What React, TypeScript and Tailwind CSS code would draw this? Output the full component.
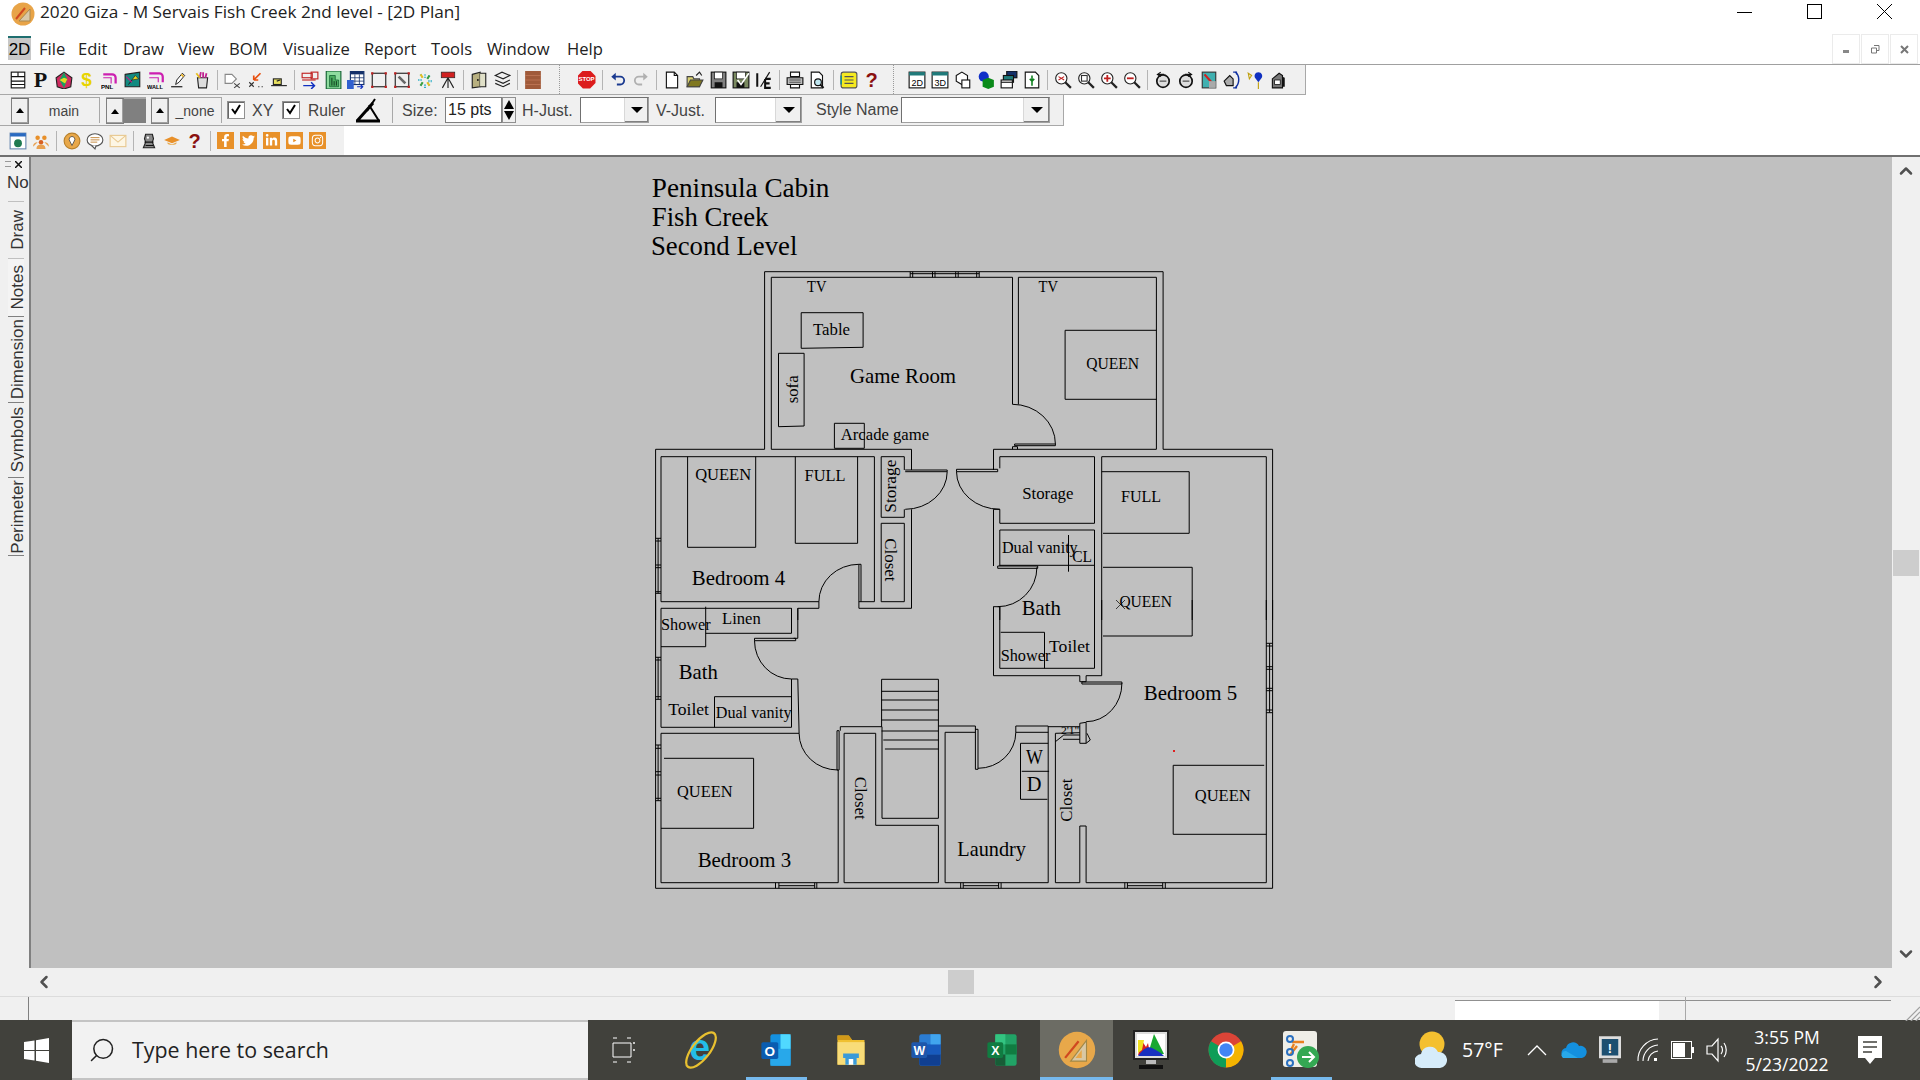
import type { ReactNode } from "react"
import { ChevronDown, ChevronLeft, ChevronRight, ChevronUp, Search } from "lucide-react"
import { FaFacebookF, FaInstagram, FaLinkedinIn, FaTwitter, FaYoutube } from "react-icons/fa"

const UI = "font-['Open_Sans',sans-serif]"
const ARIAL = "font-['Liberation_Sans',Arial,sans-serif]"

/* ---------- floor plan ---------- */

// plan points were read off two crops of the drawing, upper and lower half
const A = (x: number, y: number): [number, number] => [640 + x / 2.376, 160 + y / 3]
const B = (x: number, y: number): [number, number] => [640 + x / 2.376, 600 + y / 3]

const upperLines: number[][] = [
  [37, 868, 296, 868, 296, 335, 1243, 335, 1243, 868, 1503, 868, 1503, 1380],
  [37, 868, 37, 1380],
  [312, 868, 312, 352, 885, 352, 885, 733],
  [899, 733, 899, 352, 1227, 352, 1227, 868],
  [312, 868, 645, 868, 645, 930],
  [840, 930, 840, 868, 1227, 868],
  [50, 1325, 50, 890, 557, 890, 557, 1325, 520, 1325],
  [113, 890, 113, 1162, 275, 1162, 275, 890],
  [369, 890, 369, 1150, 517, 1150, 517, 890],
  [573, 1072, 573, 890, 628, 890, 628, 930],
  [630, 930, 730, 930, 730, 935, 630, 935],
  [628, 1048, 628, 1072, 573, 1072],
  [645, 1048, 645, 1345, 520, 1345, 520, 1213, 525, 1213, 525, 1325],
  [573, 1090, 628, 1090, 628, 1325, 573, 1325, 573, 1090],
  [425, 1325, 50, 1325],
  [50, 1345, 360, 1345, 360, 1380],
  [425, 1325, 425, 1345],
  [375, 1380, 375, 1345, 425, 1345],
  [752, 935, 850, 935, 850, 928, 752, 928, 752, 935],
  [855, 925, 855, 890, 1080, 890, 1080, 1090, 855, 1090, 855, 1048, 840, 1048, 840, 1218],
  [855, 1218, 855, 1110, 1080, 1110, 1080, 1380],
  [855, 1216, 1080, 1216],
  [1018, 1125, 1018, 1235],
  [850, 1218, 945, 1218, 945, 1225, 850, 1225, 850, 1218],
  [840, 1340, 855, 1340, 855, 1380],
  [840, 1340, 840, 1380],
  [1488, 1380, 1488, 890, 1097, 890, 1097, 1380],
  [1097, 935, 1305, 935, 1305, 1120, 1100, 1120],
  [1100, 1222, 1312, 1222, 1312, 1380],
  [383, 458, 530, 458, 530, 562, 383, 565, 383, 458],
  [329, 580, 390, 580, 390, 798, 329, 800, 329, 580],
  [462, 790, 533, 790, 533, 865, 462, 865, 462, 790],
  [1010, 511, 1227, 511],
  [1010, 511, 1010, 718, 1227, 718],
  [890, 852, 987, 852, 987, 857, 890, 857, 890, 852],
  [885, 868, 885, 860, 897, 860, 897, 868],
  [642, 335, 642, 352], [648, 335, 648, 352], [695, 335, 695, 352], [701, 335, 701, 352],
  [750, 335, 750, 352], [756, 335, 756, 352], [800, 335, 800, 352], [806, 335, 806, 352],
  [642, 341, 806, 341],
  [37, 1135, 50, 1135], [37, 1143, 50, 1143], [37, 1215, 50, 1215], [37, 1223, 50, 1223],
  [37, 1295, 50, 1295], [37, 1300, 50, 1300], [43, 1135, 43, 1300],
]

const lowerLines: number[][] = [
  [37, 0, 37, 865, 1503, 865, 1503, 0],
  [50, 25, 50, 382, 360, 382, 360, 237, 375, 237, 378, 400, 50, 400, 50, 848, 471, 848, 471, 510],
  [360, 25, 360, 100, 156, 100],
  [156, 20, 156, 140, 50, 140],
  [375, 25, 375, 115, 365, 115],
  [272, 115, 370, 115, 370, 122, 272, 122, 272, 115],
  [177, 290, 360, 290],
  [177, 290, 177, 382],
  [468, 392, 468, 510, 473, 510, 473, 392, 468, 392],
  [57, 475, 270, 475, 270, 685, 50, 685],
  [476, 392, 476, 380, 575, 380],
  [485, 848, 485, 400, 560, 400, 560, 676, 709, 676, 709, 848, 485, 848],
  [575, 380, 575, 655, 709, 655, 709, 238, 574, 238, 574, 380],
  [574, 274, 709, 274], [574, 300, 709, 300], [574, 330, 709, 330], [574, 360, 709, 360],
  [574, 393, 709, 393], [578, 420, 709, 420], [582, 447, 709, 447],
  [709, 378, 797, 378, 797, 508, 803, 508, 803, 388, 797, 388],
  [725, 397, 797, 397],
  [725, 397, 725, 848, 970, 848, 970, 378, 893, 378, 893, 397, 970, 397],
  [904, 430, 970, 430],
  [904, 430, 904, 598, 968, 598],
  [907, 514, 972, 514],
  [987, 400, 987, 848, 1045, 848, 1045, 678, 1060, 678, 1060, 848, 1488, 848, 1488, 0],
  [987, 400, 1045, 398],
  [970, 380, 1045, 380],
  [1045, 370, 1060, 367, 1060, 430, 1045, 430, 1045, 370],
  [987, 425, 1007, 405, 1045, 405],
  [1045, 418, 1005, 418],
  [1050, 246, 1145, 246, 1145, 252, 1050, 252, 1050, 246],
  [840, 20, 840, 227, 1045, 227, 1045, 245, 1060, 245, 1060, 227, 1097, 227, 1097, 0],
  [855, 20, 855, 205, 1080, 205, 1080, 0],
  [857, 97, 961, 97, 961, 205],
  [1100, 108, 1312, 108, 1312, 0],
  [1267, 496, 1483, 496],
  [1267, 496, 1267, 703, 1488, 703],
  [1062, 400, 1070, 420, 1060, 430],
  [37, 172, 50, 172], [37, 180, 50, 180], [37, 290, 50, 290], [37, 298, 50, 298], [43, 172, 43, 298],
  [37, 435, 50, 435], [37, 445, 50, 445], [37, 515, 50, 515], [37, 525, 50, 525], [37, 595, 50, 595], [37, 602, 50, 602], [43, 435, 43, 602],
  [1488, 130, 1503, 130], [1488, 138, 1503, 138], [1488, 200, 1503, 200], [1488, 208, 1503, 208],
  [1488, 265, 1503, 265], [1488, 272, 1503, 272], [1488, 330, 1503, 330], [1488, 338, 1503, 338], [1496, 130, 1496, 338],
  [322, 848, 322, 865], [330, 848, 330, 865], [415, 848, 415, 865], [420, 848, 420, 865], [330, 857, 415, 857],
  [762, 848, 762, 865], [768, 848, 768, 865], [852, 848, 852, 865], [858, 848, 858, 865], [768, 857, 852, 857],
  [1152, 848, 1152, 865], [1158, 848, 1158, 865], [1242, 848, 1242, 865], [1248, 848, 1248, 865], [1158, 857, 1242, 857],
]

type Arc = [number, number, number, number, 0 | 1]
const upperDoors: Arc[] = [
  [730, 935, 630, 1048, 1],
  [752, 935, 855, 1048, 0],
  [885, 733, 987, 852, 1],
  [520, 1213, 425, 1325, 0],
  [943, 1222, 850, 1340, 1],
]
const lowerDoors: Arc[] = [
  [272, 122, 360, 237, 0],
  [378, 400, 470, 510, 0],
  [803, 505, 893, 397, 0],
  [1060, 365, 1145, 250, 0],
]

type Label = [string, number, number, number, number]
// text, x, baseline, width, size
const upperLabels: Label[] = [
  ["Peninsula Cabin", 28, 110, 422, 27],
  ["Fish Creek", 28, 198, 277, 27],
  ["Second Level", 26, 284, 348, 27],
  ["TV", 397, 397, 46, 17],
  ["TV", 947, 397, 46, 17],
  ["Table", 411, 526, 88, 17],
  ["Game Room", 499, 668, 252, 22],
  ["Arcade game", 477, 840, 210, 17],
  ["QUEEN", 1060, 626, 126, 17],
  ["QUEEN", 131, 960, 133, 17],
  ["FULL", 391, 964, 97, 17],
  ["Storage", 908, 1017, 122, 17],
  ["FULL", 1143, 1027, 95, 17],
  ["Dual vanity", 860, 1180, 180, 17],
  ["CL", 1027, 1206, 47, 17],
  ["Bedroom 4", 123, 1275, 222, 22],
  ["QUEEN", 1139, 1340, 125, 17],
  ["Bath", 907, 1365, 93, 22],
]
const lowerLabels: Label[] = [
  ["Shower", 50, 90, 118, 17],
  ["Linen", 195, 72, 92, 17],
  ["Bath", 92, 236, 93, 22],
  ["Toilet", 67, 345, 97, 17],
  ["Dual vanity", 180, 354, 180, 17],
  ["Shower", 857, 183, 118, 17],
  ["Toilet", 972, 156, 97, 17],
  ["Bedroom 5", 1197, 299, 222, 22],
  ["QUEEN", 88, 592, 132, 17],
  ["Bedroom 3", 137, 800, 222, 22],
  ["Laundry", 754, 768, 163, 22],
  ["W", 917, 492, 40, 21],
  ["D", 919, 574, 35, 21],
  ["QUEEN", 1318, 603, 133, 17],
  ['2\'1"', 1000, 402, 44, 11],
]

const linePath = (pts: number[], map: typeof A) => {
  let d = ""
  for (let i = 0; i < pts.length; i += 2) {
    const [x, y] = map(pts[i], pts[i + 1])
    d += `${i ? "L" : "M"}${x.toFixed(1)} ${y.toFixed(1)}`
  }
  return d
}

const arcPath = (a: Arc, map: typeof A) => {
  const [x1, y1] = map(a[0], a[1])
  const [x2, y2] = map(a[2], a[3])
  return `M${x1.toFixed(1)} ${y1.toFixed(1)}A${Math.abs(x2 - x1).toFixed(1)} ${Math.abs(y2 - y1).toFixed(1)} 0 0 ${a[4]} ${x2.toFixed(1)} ${y2.toFixed(1)}`
}

function PlanLabels({ items, map }: { items: Label[]; map: typeof A }) {
  return (
    <>
      {items.map(([t, x, y, w, s], i) => {
        const [px, py] = map(x, y)
        return (
          <text key={i} x={px} y={py} fontSize={s} textLength={w / 2.376} lengthAdjust="spacingAndGlyphs">
            {t}
          </text>
        )
      })}
    </>
  )
}

function SideLabel({ t, x, y, len, deg }: { t: string; x: number; y: number; len: number; deg: number }) {
  return (
    <text transform={`translate(${x} ${y}) rotate(${deg})`} fontSize={17} textLength={len} lengthAdjust="spacingAndGlyphs">
      {t}
    </text>
  )
}

function FloorPlan() {
  const side = [
    { t: "sofa", p: A(375, 730), len: 28, deg: -90 },
    { t: "Storage", p: A(608, 1058), len: 53, deg: -90 },
    { t: "Closet", p: A(583, 1135), len: 43, deg: 90 },
    { t: "Closet", p: B(512, 530), len: 43, deg: 90 },
    { t: "Closet", p: B(1026, 665), len: 43, deg: -90 },
  ]
  return (
    <svg width={1861} height={811} viewBox="31 157 1861 811" className="block">
      <g fill="none" stroke="#000" strokeWidth={1}>
        {upperLines.map((l, i) => <path key={i} d={linePath(l, A)} />)}
        {lowerLines.map((l, i) => <path key={i} d={linePath(l, B)} />)}
        {upperDoors.map((a, i) => <path key={i} d={arcPath(a, A)} />)}
        {lowerDoors.map((a, i) => <path key={i} d={arcPath(a, B)} />)}
        <path d="M1116 600l9 9m0-9l-9 9" strokeWidth={0.7} />
      </g>
      <rect x={1173} y={750} width={2} height={2} fill="#e02020" />
      <g fontFamily="'Liberation Serif','Times New Roman',serif" fill="#000">
        <PlanLabels items={upperLabels} map={A} />
        <PlanLabels items={lowerLabels} map={B} />
        {side.map((s, i) => (
          <SideLabel key={i} t={s.t} x={s.p[0]} y={s.p[1]} len={s.len} deg={s.deg} />
        ))}
      </g>
    </svg>
  )
}

/* ---------- toolbar bits ---------- */

function Ico({ children }: { children: ReactNode }) {
  return <svg width={18} height={18} viewBox="0 0 16 16" className="block">{children}</svg>
}

function Btn({ children }: { children: ReactNode }) {
  return <div className="flex h-full w-[23px] shrink-0 items-center justify-center">{children}</div>
}

function Sep() {
  return (
    <div className="flex h-full w-[8px] shrink-0 items-center justify-center">
      <div className="h-[20px] w-px bg-[#b4b4b4]" />
    </div>
  )
}

function Grip({ w }: { w: string }) {
  return <div className={`h-full shrink-0 ${w} flex items-center justify-center`}><div className="h-full w-[2px] border-l border-dotted border-[#9a9a9a]" /></div>
}

function Letter({ c, color, cls }: { c: string; color: string; cls: string }) {
  return <span className={`leading-none ${cls}`} style={{ color }}>{c}</span>
}

function Mag({ mark }: { mark: ReactNode }) {
  return (
    <Ico>
      <circle cx={6.5} cy={6.5} r={5} fill="#fff" stroke="#222" strokeWidth={1} />
      <path d="M10 10l5 5" stroke="#222" strokeWidth={2} />
      {mark}
    </Ico>
  )
}

const row1: ReactNode[] = [
  <Ico><rect x={2} y={1} width={12} height={14} fill="#fff" stroke="#111" /><path d="M2 5h12M2 9h12M2 12h12M8 1v4" stroke="#111" /></Ico>,
  <Letter c="P" color="#111" cls="font-['Liberation_Serif',serif] text-[22px] font-bold" />,
  <Ico><path d="M8 1l7 5-1 8-6 2-6-2-1-8z" fill="#d02a60" stroke="#222" /><path d="M8 1l3 6-3 8-4-7z" fill="#18a060" /><path d="M4 8l4-2 3 1-2 4z" fill="#e8d820" /></Ico>,
  <Letter c="$" color="#e8d400" cls={`${ARIAL} text-[19px] font-bold`} />,
  <Ico><path d="M2 3h8a3 3 0 0 1 3 3v5" fill="none" stroke="#cc1fb0" strokeWidth={2} /><path d="M2 6h7v5" fill="none" stroke="#cc1fb0" /><text x={0} y={16} fontSize={5.5} fontFamily="'Liberation Sans'" fontWeight="bold">PNL</text></Ico>,
  <Ico><path d="M1 3l13-2v13H1z" fill="#118a80" stroke="#222" /><path d="M4 12l6-8 3 3-6 1z" fill="#e8d820" stroke="#222" strokeWidth={0.6} /><path d="M2 5l5 5" stroke="#c02080" /></Ico>,
  <Ico><path d="M2 2h9a3 3 0 0 1 3 3v5" fill="none" stroke="#cc1fb0" strokeWidth={2} /><path d="M2 6h8v4" fill="none" stroke="#cc1fb0" /><text x={0} y={16} fontSize={5} fontFamily="'Liberation Sans'" fontWeight="bold">WALL</text></Ico>,
  <Ico><path d="M1 14h10" stroke="#111" /><path d="M5 12l1-4 5-6 2 2-5 6z" fill="#fff" stroke="#111" strokeWidth={0.8} /><path d="M10 3l2 2" stroke="#e8b020" strokeWidth={1.4} /></Ico>,
  <Ico><path d="M4 6h9l-1 9H5z" fill="#ddd" stroke="#222" /><path d="M6 6l1-5M9 6V1M11 6l1-4" stroke="#c02090" strokeWidth={1.6} /><path d="M3 2l3 4" stroke="#e8c020" strokeWidth={1.6} /></Ico>,
  <Ico><path d="M1 3h6l4 4-4 4H1z" fill="#fff" stroke="#888" /><path d="M9 11l5 4m0-4l-5 4" stroke="#444" /></Ico>,
  <Ico><path d="M12 2L6 8M6 8V4M6 8h4" stroke="#e85010" strokeWidth={1.5} fill="none" /><path d="M2 10l4 4m0-4l-4 4" stroke="#333" /><path d="M10 14h1m2 0h1" stroke="#222" /></Ico>,
  <Ico><rect x={3} y={7} width={7} height={5} fill="#e8e060" stroke="#222" /><path d="M1 13h14" stroke="#222" /><path d="M6 9l3-1" stroke="#222" /></Ico>,
  <Ico><rect x={1} y={2} width={9} height={4} fill="none" stroke="#c02020" /><rect x={9} y={1} width={6} height={6} fill="none" stroke="#c02020" /><path d="M1 8h12" stroke="#c02020" /><path d="M2 13h10m-3-3l3 3-3 3" stroke="#1030c0" strokeWidth={1.3} fill="none" /></Ico>,
  <Ico><rect x={2} y={0} width={13} height={16} fill="#8fdc9f" stroke="#126030" /><path d="M5 4h5v4h3v6H5z" fill="#4cae60" stroke="#126030" strokeWidth={0.7} /><path d="M7 6v7M9 9v4M11 9v4" stroke="#0a3018" strokeWidth={0.8} /></Ico>,
  <Ico><rect x={3} y={0} width={12} height={12} fill="#fff" stroke="#14306a" /><path d="M3 0h12v3H3z" fill="#14306a" /><path d="M7 3v9M11 3v9M3 6h12M3 9h12" stroke="#14306a" strokeWidth={0.7} /><rect x={0} y={8} width={6} height={8} fill="#3060d0" /><path d="M9 14h5m-2-2l2 2-2 2" stroke="#1030c0" fill="none" /></Ico>,
  <Ico><rect x={2} y={2} width={12} height={12} fill="none" stroke="#222" /><path d="M1 1h2v2H1zM13 1h2v2h-2zM1 13h2v2H1zM13 13h2v2h-2z" fill="#c02020" /></Ico>,
  <Ico><rect x={2} y={2} width={12} height={12} fill="#eee" stroke="#222" /><path d="M1 1h2v2H1zM13 1h2v2h-2zM1 13h2v2H1zM13 13h2v2h-2z" fill="#c02020" /><path d="M5 5l6 6" stroke="#666" strokeWidth={2.4} /></Ico>,
  <Ico><path d="M8 3v3M4 3l2 3M12 4l-2 3M2 8h3M11 9h3M4 13l2-3M8 15v-4M12 13l-2-3" strokeWidth={1.8} stroke="#30b0c8" strokeDasharray="1 1" /><path d="M4 3l2 3M12 13l-2-3" stroke="#e8c020" strokeWidth={1.8} /><path d="M12 4l-2 3M4 13l2-3" stroke="#40a040" strokeWidth={1.8} /></Ico>,
  <Ico><rect x={2} y={1} width={12} height={5} fill="#d02020" stroke="#222" strokeWidth={0.6} /><path d="M8 6L3 15M8 6v9M8 6l5 9" stroke="#222" fill="none" /></Ico>,
  <Ico><path d="M2 3l7-2v13l-7 1z" fill="#b8b080" stroke="#222" /><path d="M9 2h5v12H9" fill="#e0e0c8" stroke="#222" /><circle cx={7} cy={8} r={0.8} fill="#111" /></Ico>,
  <Ico><path d="M2 4l6-3 7 3-6 3zM2 8l7 3 6-3M2 11l7 3 6-3" fill="none" stroke="#222" /></Ico>,
]

const row1b: ReactNode[] = [
  <Ico><rect x={1} y={0} width={14} height={16} fill="#a05a3a" /><path d="M1 4h14M1 8h14M1 12h14" stroke="#c07858" strokeWidth={0.7} /></Ico>,
]

const row1c: ReactNode[] = [
  <div className="relative flex h-[18px] w-[18px] items-center justify-center bg-[#dc1c1c] [clip-path:polygon(30%_0,70%_0,100%_30%,100%_70%,70%_100%,30%_100%,0_70%,0_30%)]">
    <span className={`${ARIAL} text-[6px] font-bold text-white`}>STOP</span>
  </div>,
]

const row1d: ReactNode[] = [
  <Ico><path d="M5 5h5a3.5 3.5 0 0 1 0 7H7" fill="none" stroke="#1a3a90" strokeWidth={1.6} /><path d="M6 1.5L2 5l4 3.5z" fill="#1a3a90" /></Ico>,
  <Ico><path d="M11 5H6a3.5 3.5 0 0 0 0 7h3" fill="none" stroke="#b0b0b0" strokeWidth={1.6} /><path d="M10 1.5L14 5l-4 3.5z" fill="#b0b0b0" /></Ico>,
]

const row1e: ReactNode[] = [
  <Ico><path d="M3 1h7l3 3v11H3z" fill="#fff" stroke="#111" /><path d="M10 1v3h3" fill="none" stroke="#111" /></Ico>,
  <Ico><path d="M1 14V5h5l1 2h5v7z" fill="#d8d070" stroke="#444" /><path d="M1 14l3-6h11l-3 6z" fill="#807820" stroke="#444" /><path d="M9 4l3-3 2 3" fill="none" stroke="#222" /></Ico>,
  <Ico><rect x={2} y={1} width={13} height={14} fill="#808080" stroke="#111" /><rect x={5} y={1} width={7} height={6} fill="#fff" stroke="#111" strokeWidth={0.6} /><rect x={5} y={10} width={7} height={5} fill="#111" /></Ico>,
  <Ico><rect x={1} y={1} width={14} height={14} fill="#7a8a60" stroke="#111" /><rect x={4} y={1} width={8} height={6} fill="#fff" stroke="#111" strokeWidth={0.6} /><rect x={4} y={10} width={7} height={5} fill="#111" /><path d="M5 8l3 4 7-10" stroke="#fff" strokeWidth={1.4} fill="none" /></Ico>,
  <Ico><path d="M2 2v12" stroke="#111" strokeWidth={1.8} /><path d="M5 14L13 1" stroke="#111" strokeWidth={1} /><path d="M9 7h5M9 7v8h5M9 11h4" stroke="#111" strokeWidth={1.8} fill="none" /></Ico>,
]

const row1f: ReactNode[] = [
  <Ico><path d="M4 1h8v4H4z" fill="#fff" stroke="#111" /><path d="M1 6h14v6H1z" fill="#bbb" stroke="#111" /><path d="M3 8h10M3 10h10" stroke="#333" strokeWidth={0.7} /><path d="M4 12h8v3H4z" fill="#fff" stroke="#111" /></Ico>,
  <Ico><path d="M2 1h7l3 3v11H2z" fill="#fff" stroke="#111" /><circle cx={8} cy={10} r={3} fill="#bfe6f0" stroke="#111" /><path d="M10 12l3 3" stroke="#111" strokeWidth={1.6} /></Ico>,
]

const row1g: ReactNode[] = [
  <Ico><rect x={1} y={1} width={14} height={14} rx={2} fill="#f5ea20" stroke="#555" /><path d="M4 5h8M4 8h8M4 11h8" stroke="#555" /><path d="M1 4v8" stroke="#1f8a8a" strokeWidth={1.5} /></Ico>,
  <Letter c="?" color="#8a1010" cls={`${ARIAL} text-[20px] font-bold`} />,
]

const panel = (label: string) => (
  <Ico>
    <rect x={1} y={1} width={14} height={14} fill="#fff" stroke="#111" />
    <rect x={1} y={1} width={14} height={3} fill="#1f7a7a" />
    <text x={3} y={13} fontSize={8} fontFamily="'Liberation Sans'" stroke="none">{label}</text>
  </Ico>
)

const row1h: ReactNode[] = [
  panel("2D"),
  panel("3D"),
  <Ico><path d="M2 4l5-3 5 3v5l-5 3-5-3z" fill="#fff" stroke="#111" /><rect x={7} y={8} width={7} height={7} fill="#fff" stroke="#111" /></Ico>,
  <Ico><circle cx={6} cy={5} r={4.5} fill="#1030c8" /><path d="M5 8l5-2 5 2v6l-5 2-5-2z" fill="#0a8a1a" /></Ico>,
  <Ico><rect x={6} y={0} width={9} height={6} fill="#14306a" stroke="#111" /><rect x={3} y={4} width={9} height={6} fill="#1f7a7a" stroke="#111" /><rect x={1} y={8} width={10} height={7} fill="#fff" stroke="#111" /><path d="M1 10h10" stroke="#111" /></Ico>,
  <Ico><path d="M2 1h9l3 3v11H2z" fill="#fff" stroke="#111" /><path d="M8 4v4m-2-1l2 2 2-2M8 13V9" stroke="#108020" strokeWidth={1.4} fill="none" /></Ico>,
]

const row1i: ReactNode[] = [
  <Mag mark={<path d="M4 5l5 3m0-3L4 8" stroke="#c02020" />} />,
  <Mag mark={<rect x={4} y={4} width={5} height={5} fill="none" stroke="#333" />} />,
  <Mag mark={<path d="M6.5 3.5v6M3.5 6.5h6" stroke="#c02020" strokeWidth={1.6} />} />,
  <Mag mark={<path d="M3.5 6.5h6" stroke="#c02020" strokeWidth={1.6} />} />,
]

const row1j: ReactNode[] = [
  <Ico><circle cx={8} cy={9} r={5.5} fill="#ddd" stroke="#111" strokeWidth={1.5} /><path d="M3 3h6M6 1l-3 2 3 2" stroke="#111" fill="none" /><path d="M5 9h6" stroke="#444" /></Ico>,
  <Ico><circle cx={8} cy={9} r={5.5} fill="#ddd" stroke="#111" strokeWidth={1.5} /><path d="M13 3H7M10 1l3 2-3 2" stroke="#111" fill="none" /><path d="M5 9h6" stroke="#444" /></Ico>,
  <Ico><rect x={2} y={1} width={12} height={14} fill="#40b0b0" stroke="#333" /><path d="M4 3l8 9" stroke="#d02020" strokeWidth={2} /><rect x={8} y={9} width={6} height={6} fill="#aaa" /></Ico>,
  <Ico><path d="M1 9l5-5 3 3v6H3z" fill="#aaa" stroke="#111" /><path d="M11 1c4 3 4 10 0 14" fill="none" stroke="#1030a0" strokeWidth={1.3} /><path d="M9 1h3v2M9 15h3v-2" stroke="#1030a0" fill="none" /></Ico>,
  <Ico><path d="M11 1c3 0 4 3 3 5l-3 4-3-4c-1-2 0-5 3-5z" fill="#1030c0" /><path d="M11 10v6" stroke="#c0a010" /><path d="M2 2l3 2-2 3z" fill="none" stroke="#c0a010" /></Ico>,
  <Ico><path d="M3 7l6-5 3 2v11H3z" fill="#777" stroke="#111" /><rect x={5} y={8} width={5} height={4} fill="#fff" stroke="#111" strokeWidth={0.7} /><path d="M12 5l2 1v8h-2" fill="#111" /></Ico>,
]

const row3a: ReactNode[] = [
  <Ico><rect x={1} y={1} width={14} height={14} fill="#fff" stroke="#6a8ab0" /><rect x={1} y={1} width={14} height={3} fill="#2a6ac0" /><circle cx={8} cy={10} r={3.5} fill="#1f7a50" /></Ico>,
  <Ico><circle cx={5} cy={5} r={2} fill="#e8902a" /><circle cx={11} cy={5} r={2} fill="#e8902a" /><circle cx={8} cy={9} r={2} fill="#d86020" /><path d="M1 13c0-3 2-4 4-4M15 13c0-3-2-4-4-4M4 15c0-3 2-4 4-4s4 1 4 4" fill="#e8a050" /></Ico>,
]

const row3b: ReactNode[] = [
  <Ico><circle cx={8} cy={8} r={7} fill="#e8a84a" stroke="#b8802a" /><path d="M8 4a2.5 2.5 0 0 1 2 4l-2 4-2-4a2.5 2.5 0 0 1 2-4z" fill="#fff" stroke="#444" strokeWidth={0.7} /></Ico>,
  <Ico><ellipse cx={8} cy={7} rx={7} ry={5.5} fill="#fff" stroke="#555" /><path d="M5 12l3 3 1-3" fill="#fff" stroke="#555" /><path d="M4 5h8M4 7h8M4 9h6" stroke="#c08030" strokeWidth={0.8} /></Ico>,
  <Ico><rect x={1} y={3} width={14} height={10} fill="#fdf6e4" stroke="#e8c890" /><path d="M1 3l7 6 7-6" fill="none" stroke="#e8c890" /></Ico>,
]

const row3c: ReactNode[] = [
  <Ico><path d="M5 2h6l1 4-1 3 2 5H3l2-5-1-3z" fill="#888" stroke="#222" /><circle cx={7} cy={5} r={1} fill="#fff" /><path d="M4 9h8M5 12h7" stroke="#111" /></Ico>,
  <Ico><path d="M1 7l7-3 7 3-7 3z" fill="#e8902a" /><path d="M4 10c0 2 8 2 8 0v-1l-4 2-4-2z" fill="#e8a84a" /></Ico>,
  <Letter c="?" color="#8a1010" cls={`${ARIAL} text-[20px] font-bold`} />,
]

const social = [FaFacebookF, FaTwitter, FaLinkedinIn, FaYoutube, FaInstagram]

function UpBtn() {
  return (
    <div className="flex h-[26px] w-[18px] shrink-0 items-center justify-center border border-[#808080] border-t-[#707070] bg-[#f0f0f0] shadow-[inset_-1px_-1px_0_#a0a0a0]">
      <div className="h-0 w-0 border-x-[4px] border-b-[5px] border-x-transparent border-b-black" />
    </div>
  )
}

function Check() {
  return (
    <div className="flex h-[18px] w-[18px] shrink-0 items-center justify-center border border-[#909090] bg-white shadow-[inset_1px_1px_0_#666]">
      <svg width={12} height={12} viewBox="0 0 12 12"><path d="M2 5l3 4 5-8" fill="none" stroke="#000" strokeWidth={2} /></svg>
    </div>
  )
}

function Select({ w, btn }: { w: string; btn: string }) {
  return (
    <div className={`flex h-[26px] ${w} shrink-0 justify-end border border-[#a0a0a0] border-t-[#707070] border-l-[#707070] bg-white`}>
      <div className={`flex ${btn} items-center justify-center border-l border-[#d8d8d8] bg-[#f0f0f0] shadow-[inset_-1px_-1px_0_#808080]`}>
        <div className="h-0 w-0 border-x-[6px] border-t-[6px] border-x-transparent border-t-black" />
      </div>
    </div>
  )
}

const menus: [string, string][] = [
  ["File", "w-[39px]"],
  ["Edit", "w-[45px]"],
  ["Draw", "w-[55px]"],
  ["View", "w-[51px]"],
  ["BOM", "w-[54px]"],
  ["Visualize", "w-[81px]"],
  ["Report", "w-[67px]"],
  ["Tools", "w-[56px]"],
  ["Window", "w-[80px]"],
  ["Help", "w-[50px]"],
]

const tabs: [string, string, string][] = [
  ["Draw", "h-[58px]", "border-t border-[#c0c0c0]"],
  ["Notes", "h-[58px]", "bg-[#f4f4f4]"],
  ["Dimension", "h-[86px]", ""],
  ["Symbols", "h-[75px]", ""],
  ["Perimeter", "h-[78px]", ""],
]

function Slot({ children, active, under, w = "w-[75px]" }: { children: ReactNode; active?: boolean; under?: string; w?: string }) {
  return (
    <div className={`relative flex h-full shrink-0 items-center justify-center ${w} ${active ? "bg-[#6c6c64]" : ""}`}>
      {children}
      {under && <div className={`absolute bottom-0 h-[3px] bg-[#76b9ed] ${under}`} />}
    </div>
  )
}

function Tb({ children, size = 36 }: { children: ReactNode; size?: number }) {
  return <svg width={size} height={size} viewBox="0 0 32 32" className="block">{children}</svg>
}

export default function App() {
  return (
    <div className="flex h-[1080px] w-[1920px] flex-col overflow-hidden bg-white text-black">
      {/* title bar */}
      <div className="flex h-[32px] shrink-0 items-center">
        <div className="ml-[11px] w-[24px]">
          <svg width={24} height={24} viewBox="0 0 24 24" className="block -translate-y-[2px]">
            <circle cx={12} cy={12} r={11.5} fill="#e8a448" />
            <path d="M8 19L19 7v12z" fill="#d9c9a8" stroke="#a88850" />
            <path d="M5 17L14 6" stroke="#d04820" strokeWidth={2} />
          </svg>
        </div>
        <span className={`${UI} ml-[5px] -translate-y-[4px] text-[17.2px] text-[#222]`}>2020 Giza - M Servais Fish Creek 2nd level - [2D Plan]</span>
        <div className="ml-auto flex h-full">
          <div className="flex w-[70px] items-start justify-center pt-[12px]"><div className="h-px w-[15px] bg-black" /></div>
          <div className="flex w-[70px] items-start justify-center pt-[4px]"><div className="h-[15px] w-[15px] border border-black" /></div>
          <div className="flex w-[71px] items-start justify-center pt-[4px]">
            <svg width={15} height={15} viewBox="0 0 15 15"><path d="M0 0l15 15M15 0L0 15" stroke="#000" /></svg>
          </div>
        </div>
      </div>

      {/* menu bar */}
      <div className="flex h-[33px] shrink-0 items-center border-b border-[#a0a0a0]">
        <div className="ml-[8px] flex h-[24px] w-[23px] items-center justify-center border-t-2 border-[#1f6f70] bg-[#c8c8c8] font-['Liberation_Sans',sans-serif] text-[17px] leading-none">2D</div>
        <div className="ml-[8px] flex">
          {menus.map(([m, w]) => (
            <span key={m} className={`${UI} ${w} pt-[2px] text-[16.6px] text-[#222]`}>{m}</span>
          ))}
        </div>
        <div className="ml-auto mr-[2px] flex h-full items-stretch gap-px pt-[2px] text-[#808080]">
          {["-", "r", "x"].map((k) => (
            <div key={k} className="flex w-[28px] items-center justify-center border border-[#ebebeb]">
              {k === "-" && <div className="mt-[4px] h-[3px] w-[6px] bg-[#888]" />}
              {k === "r" && <svg width={9} height={9} viewBox="0 0 9 9"><path d="M3 .5h5v5H6M.5 3h5v5h-5z" fill="none" stroke="#777" /></svg>}
              {k === "x" && <svg width={9} height={9} viewBox="0 0 9 9"><path d="M1 1l7 7M8 1L1 8" stroke="#777" strokeWidth={2} /></svg>}
            </div>
          ))}
        </div>
      </div>

      {/* toolbar 1 */}
      <div className="flex h-[30px] w-[1306px] shrink-0 items-center border-r border-b border-[#a8a8a8] bg-[#f0f0f0] pl-[6px]">
        {row1.slice(0, 9).map((n, i) => <Btn key={i}>{n}</Btn>)}
        <Sep />
        {row1.slice(9, 12).map((n, i) => <Btn key={i}>{n}</Btn>)}
        <Sep />
        {row1.slice(12, 19).map((n, i) => <Btn key={i}>{n}</Btn>)}
        <Sep />
        {row1.slice(19).map((n, i) => <Btn key={i}>{n}</Btn>)}
        <Sep />
        {row1b.map((n, i) => <Btn key={i}>{n}</Btn>)}
        <Grip w="w-[31px]" />
        {row1c.map((n, i) => <Btn key={i}>{n}</Btn>)}
        <Sep />
        {row1d.map((n, i) => <Btn key={i}>{n}</Btn>)}
        <Sep />
        {row1e.map((n, i) => <Btn key={i}>{n}</Btn>)}
        <Sep />
        {row1f.map((n, i) => <Btn key={i}>{n}</Btn>)}
        <Sep />
        {row1g.map((n, i) => <Btn key={i}>{n}</Btn>)}
        <Grip w="w-[22px]" />
        {row1h.map((n, i) => <Btn key={i}>{n}</Btn>)}
        <Sep />
        {row1i.map((n, i) => <Btn key={i}>{n}</Btn>)}
        <Sep />
        {row1j.map((n, i) => <Btn key={i}>{n}</Btn>)}
      </div>

      {/* toolbar 2 */}
      <div className={`${ARIAL} flex h-[31px] w-[1064px] shrink-0 items-center border-r border-b border-[#a8a8a8] bg-[#f0f0f0] text-[16px] text-[#444]`}>
        <div className="ml-[11px] flex h-[26px] w-[89px] items-center border-t border-r border-[#a8a8a8]">
          <UpBtn />
          <span className="flex-1 pt-[2px] text-center text-[14px]">main</span>
        </div>
        <div className="ml-[6px] flex h-[26px] w-[40px] items-center border-t-2 border-[#a8a8a8]">
          <UpBtn />
          <div className="h-full flex-1 bg-[#808080]" />
        </div>
        <div className="ml-[5px] flex h-[26px] w-[71px] items-center border-t border-r border-[#a8a8a8]">
          <UpBtn />
          <span className="flex-1 pt-[2px] text-center text-[14px]">_none</span>
        </div>
        <div className="ml-[5px]"><Check /></div>
        <span className="ml-[7px] w-[30px] pt-[2px]">XY</span>
        <Check />
        <span className="ml-[8px] w-[47px] pt-[2px] text-[15.6px]">Ruler</span>
        <svg width={26} height={26} viewBox="0 0 26 26" className="block">
          <path d="M1 24h24M2 24L18 6" stroke="#000" strokeWidth={3} fill="none" />
          <path d="M24 24L14 8M20 2L12 14" stroke="#000" strokeWidth={2} fill="none" />
        </svg>
        <div className="ml-[11px] h-[26px] w-px bg-[#a8a8a8]" />
        <span className="ml-[9px] w-[43px] pt-[2px]">Size:</span>
        <div className="flex h-[26px] w-[57px] shrink-0 items-center border border-[#808080] bg-white pl-[2px] text-[#222]">15 pts</div>
        <div className="flex h-[26px] w-[14px] shrink-0 flex-col items-center justify-center gap-[2px] border border-[#909090] bg-[#f0f0f0]">
          <div className="h-0 w-0 border-x-[5px] border-b-[9px] border-x-transparent border-b-black" />
          <div className="h-0 w-0 border-x-[5px] border-t-[9px] border-x-transparent border-t-black" />
        </div>
        <span className="ml-[6px] w-[58px] pt-[2px]">H-Just.</span>
        <Select w="w-[69px]" btn="w-[24px]" />
        <span className="ml-[7px] w-[59px] pt-[2px]">V-Just.</span>
        <Select w="w-[87px]" btn="w-[26px]" />
        <span className="ml-[14px] w-[85px]">Style Name</span>
        <Select w="w-[149px]" btn="w-[26px]" />
      </div>

      {/* toolbar 3 */}
      <div className="flex h-[29px] w-[344px] shrink-0 items-center bg-[#f0f0f0] pl-[6px]">
        {row3a.map((n, i) => <Btn key={i}>{n}</Btn>)}
        <Sep />
        {row3b.map((n, i) => <Btn key={i}>{n}</Btn>)}
        <Sep />
        {row3c.map((n, i) => <Btn key={i}>{n}</Btn>)}
        <Sep />
        {social.map((S, i) => (
          <Btn key={i}>
            <div className="flex h-[17px] w-[17px] items-center justify-center bg-[#e8912a]">
              <S className="text-[13px] text-white" />
            </div>
          </Btn>
        ))}
      </div>

      <div className="h-[2px] shrink-0 bg-[#707070]" />

      {/* work area */}
      <div className="flex min-h-0 flex-1 flex-col bg-[#f0f0f0]">
        <div className="flex h-[811px] shrink-0">
          <div className="flex w-[31px] shrink-0 flex-col border-r-2 border-[#808080]">
            <div className="flex h-[14px] items-center justify-end gap-[4px] pr-[7px] text-[#111]">
              <div className="h-[6px] w-[6px] border-t border-b border-[#999]" />
              <svg width={7} height={7} viewBox="0 0 7 7"><path d="M0 0l7 7M7 0L0 7" stroke="#111" strokeWidth={1.5} /></svg>
            </div>
            <div className={`${ARIAL} -mt-[3px] h-[33px] shrink-0 overflow-hidden pl-[7px] text-[17px] leading-[30px] text-[#333]`}>No</div>
            {tabs.map(([t, h, extra]) => (
              <div key={t} className={`ml-[8px] flex w-[16px] shrink-0 items-center justify-center overflow-hidden border-b border-[#808080] ${h} ${extra}`}>
                <span className={`${ARIAL} translate-x-[2px] rotate-180 text-[17px] leading-[20px] text-[#333] [writing-mode:vertical-rl]`}>{t}</span>
              </div>
            ))}
          </div>
          <div className="w-[1861px] shrink-0 bg-[#c0c0c0]">
            <FloorPlan />
          </div>
          <div className="flex flex-1 flex-col items-center justify-between py-[4px] text-[#505050]">
            <ChevronUp size={20} strokeWidth={3} />
            <div className="h-[26px] w-[26px] bg-[#cdcdcd]" />
            <ChevronDown size={20} strokeWidth={3} />
          </div>
        </div>
        {/* horizontal scroll */}
        <div className="flex h-[28px] shrink-0 items-center pl-[34px] pr-[32px] text-[#505050]">
          <ChevronLeft size={20} strokeWidth={3} />
          <div className="ml-[894px] h-[24px] w-[26px] bg-[#cdcdcd]" />
          <ChevronRight size={20} strokeWidth={3} className="ml-auto" />
        </div>
        {/* status bar */}
        <div className="flex h-[25px] shrink-0 items-end border-t border-[#dcdcdc]">
          <div className="h-full w-[29px] border-r border-b border-[#808080]" />
          <div className="flex-1" />
          <div className="h-[21px] w-[204px] border-t border-[#909090] bg-white" />
          <div className="h-[21px] w-[26px] border-t border-[#909090]" />
          <div className="h-full w-px bg-[#a8a8a8]" />
          <div className="h-[21px] w-[205px] border-t border-[#909090]" />
          <div className="relative h-full w-[29px] overflow-hidden">
            <svg width={29} height={25} viewBox="0 0 29 25"><path d="M14 25L29 10M19 25L29 15M24 25l5-5" stroke="#a0a0a0" strokeWidth={1.2} /></svg>
          </div>
        </div>
      </div>

      {/* taskbar */}
      <div className={`${UI} flex h-[60px] shrink-0 items-center bg-[#41413c] text-white`}>
        <div className="flex h-full w-[72px] shrink-0 items-center justify-center">
          <svg width={25} height={25} viewBox="0 0 25 25"><path d="M0 4l10.5-1.5v9.5H0zM12 2.3L25 0v12H12zM0 13h10.5v9.5L0 21zM12 13h13v12l-13-2.3z" fill="#fff" /></svg>
        </div>
        <div className="flex h-full w-[516px] shrink-0 items-center border-y-2 border-[#c4c4c4] bg-[#f2f2f2] pl-[16px] text-[#222]">
          <Search size={28} strokeWidth={1.3} className="-scale-x-100" />
          <span className="ml-[16px] pt-[1px] text-[21.4px]">Type here to search</span>
        </div>
        <Slot w="w-[72px]">
          <svg width={24} height={28} viewBox="0 0 24 28"><path d="M1 2h4M1 7h18v14H1zM1 26h4M15 2h4M15 26h4" fill="none" stroke="#fff" strokeWidth={1} /><path d="M22 6v2m0 5v2" stroke="#fff" strokeWidth={1.4} /></svg>
        </Slot>
        <div className="w-[3px]" />
        <Slot>
          <Tb size={40}>
            <text x={15} y={24} textAnchor="middle" fontSize={30} fontWeight="bold" fontFamily="'Liberation Sans'" fill="#23bde8">e</text>
            <ellipse cx={16} cy={16} rx={7} ry={17} transform="rotate(38 16 16)" fill="none" stroke="#e8c030" strokeWidth={1.8} />
          </Tb>
        </Slot>
        <Slot under="left-[8px] w-[61px]">
          <Tb>
            <rect x={11} y={2} width={18} height={28} rx={2} fill="#1490df" />
            <path d="M11 15h18v15H11z" fill="#28a8ea" />
            <path d="M20 2h9v13h-9z" fill="#50d9ff" />
            <rect x={3} y={9} width={15} height={15} rx={1.5} fill="#0a5cb0" />
            <text x={10.5} y={21} textAnchor="middle" fontSize={12} fontWeight="bold" fontFamily="'Liberation Sans'" fill="#fff">O</text>
          </Tb>
        </Slot>
        <Slot>
          <Tb>
            <path d="M4 3h10l3 4h11v22H4z" fill="#f0c030" />
            <path d="M4 3h10l3 4H4z" fill="#d09818" />
            <path d="M4 9h24v20H4z" fill="#f8dc78" />
            <path d="M12 21h8v8h-8z" fill="#fff" />
            <path d="M9 19h14v4h-2v6h-3v-5h-4v5h-3v-6H9z" fill="#3a9ad8" />
          </Tb>
        </Slot>
        <Slot>
          <Tb>
            <rect x={10} y={2} width={19} height={28} rx={2} fill="#2b7cd3" />
            <path d="M10 11h19v9H10z" fill="#185abd" />
            <path d="M10 20h19v8a2 2 0 0 1-2 2H12a2 2 0 0 1-2-2z" fill="#103f91" />
            <path d="M20 2h9v9h-9z" fill="#41a5ee" />
            <rect x={3} y={9} width={14} height={14} rx={1.5} fill="#1f57ab" />
            <text x={10} y={20.5} textAnchor="middle" fontSize={11} fontWeight="bold" fontFamily="'Liberation Sans'" fill="#fff">W</text>
          </Tb>
        </Slot>
        <Slot w="w-[77px]">
          <Tb>
            <rect x={10} y={2} width={19} height={28} rx={2} fill="#21a366" />
            <path d="M10 2h9v9h-9z" fill="#33c481" />
            <path d="M19 11h10v9H19z" fill="#107c41" />
            <path d="M10 20h9v10h-7a2 2 0 0 1-2-2z" fill="#185c37" />
            <rect x={3} y={9} width={14} height={14} rx={1.5} fill="#107c41" />
            <text x={10} y={20.5} textAnchor="middle" fontSize={11} fontWeight="bold" fontFamily="'Liberation Sans'" fill="#fff">X</text>
          </Tb>
        </Slot>
        <Slot active under="left-0 w-full" w="w-[73px]">
          <svg width={38} height={38} viewBox="0 0 24 24">
            <circle cx={12} cy={12} r={11.5} fill="#e8a84a" />
            <path d="M8 19L18 6v13z" fill="#d9c8a4" stroke="#a08848" strokeWidth={0.7} />
            <path d="M11 17l4-5v5z" fill="#e8a84a" />
            <path d="M4.5 17L13 6.5" stroke="#d04820" strokeWidth={1.4} />
          </svg>
        </Slot>
        <Slot>
          <svg width={36} height={40} viewBox="0 0 36 40">
            <rect x={1} y={1} width={34} height={28} fill="#ddd" stroke="#222" strokeWidth={2} />
            <rect x={4} y={4} width={28} height={22} fill="#fff" />
            <path d="M5 25l4-14 4 6 2-4 2 11z" fill="#d82020" />
            <path d="M15 24l6-20 5 10 5 10z" fill="#18a830" />
            <path d="M5 26c6-8 10-10 14-8s8 4 12 8z" fill="#1830c0" />
            <path d="M5 10h6l-2 10-4 3z" fill="#f0e020" />
            <rect x={13} y={30} width={10} height={4} fill="#bbb" />
            <rect x={6} y={35} width={24} height={4} fill="#111" />
          </svg>
        </Slot>
        <Slot w="w-[76px]">
          <Tb size={36}>
            <circle cx={16} cy={16} r={15.5} fill="#db4437" />
            <path d="M16 16L29.4 8.2A15.5 15.5 0 0 1 16 31.5z" fill="#f4b400" />
            <path d="M16 16L16 31.5A15.5 15.5 0 0 1 2.6 8.2z" fill="#0f9d58" />
            <circle cx={16} cy={16} r={7.5} fill="#fff" />
            <circle cx={16} cy={16} r={6} fill="#4285f4" />
          </Tb>
        </Slot>
        <Slot w="w-[74px]" under="left-[7px] w-[61px]">
          <svg width={40} height={40} viewBox="0 0 40 40">
            <rect x={2} y={1} width={34} height={36} rx={3} fill="#efeee8" />
            <path d="M11 12h12M13 14l-3 6m-1 5l7-9" stroke="#e88020" strokeWidth={2.4} fill="none" />
            <circle cx={9} cy={9} r={3} fill="none" stroke="#2a70c0" strokeWidth={2} />
            <circle cx={9} cy={22} r={3} fill="none" stroke="#2a70c0" strokeWidth={2} />
            <circle cx={9} cy={33} r={3} fill="none" stroke="#2a70c0" strokeWidth={2} />
            <circle cx={27} cy={27} r={11} fill="#34a853" />
            <path d="M21 27h11m-4-5l5 5-5 5" fill="none" stroke="#fff" strokeWidth={2} />
          </svg>
        </Slot>

        <div className="flex h-full flex-1 items-center">
          <div className="w-[70px]" />
          <div className="flex w-[46px] justify-center">
            <svg width={32} height={38} viewBox="0 0 32 38">
              <circle cx={17} cy={13} r={12.5} fill="#f4c030" />
              <path d="M7 37a7 7 0 0 1-1-14 9 9 0 0 1 17-2 8 8 0 0 1 2 16z" fill="#d6ecfa" />
            </svg>
          </div>
          <span className="ml-[8px] w-[42px] text-[19.5px]">57°F</span>
          <div className="ml-[14px] flex w-[38px] justify-center">
            <svg width={20} height={12} viewBox="0 0 20 12"><path d="M1 11l9-9 9 9" fill="none" stroke="#fff" strokeWidth={1.3} /></svg>
          </div>
          <div className="flex w-[36px] justify-center">
            <svg width={26} height={18} viewBox="0 0 26 18"><path d="M6 17a5 5 0 0 1-1-10 7 7 0 0 1 13-2 6 6 0 0 1 3 12z" fill="#1490df" /><path d="M2 17a4 4 0 0 1 3-7l12 7z" fill="#28a8ea" /></svg>
          </div>
          <div className="flex w-[36px] justify-center">
            <svg width={22} height={30} viewBox="0 0 24 30">
              <rect x={0} y={0} width={24} height={24} fill="#ddd" />
              <rect x={3} y={3} width={18} height={18} fill="#1d4f70" />
              <text x={12} y={18} textAnchor="middle" fontSize={14} fontWeight="bold" fontFamily="'Liberation Sans'" fill="#fff">!</text>
              <rect x={4} y={25} width={16} height={4} fill="#aaa" />
            </svg>
          </div>
          <div className="flex w-[37px] justify-center">
            <svg width={24} height={26} viewBox="0 0 24 26">
              <path d="M3 24A21 21 0 0 1 23 2M8 24A16 16 0 0 1 23 8M13 24A11 11 0 0 1 23 14" fill="none" stroke="#fff" strokeWidth={1.1} />
              <rect x={19} y={21} width={3} height={3} fill="#fff" />
            </svg>
          </div>
          <div className="flex w-[35px] justify-center">
            <svg width={24} height={18} viewBox="0 0 24 18"><rect x={.5} y={.5} width={20} height={17} fill="none" stroke="#fff" /><rect x={2} y={2} width={12} height={14} fill="#fff" /><rect x={21} y={6} width={2} height={6} fill="#fff" /></svg>
          </div>
          <div className="flex w-[36px] justify-center">
            <svg width={24} height={26} viewBox="0 0 24 26"><path d="M1 9h5l6-7v22l-6-7H1z" fill="none" stroke="#fff" strokeWidth={1.2} /><path d="M15 9c2 2 2 6 0 8M18 6c3 4 3 10 0 14" fill="none" stroke="#fff" strokeWidth={1.2} /></svg>
          </div>
          <div className="flex w-[102px] flex-col items-center gap-[5px] text-[17.5px] leading-[22px]">
            <span>3:55 PM</span>
            <span>5/23/2022</span>
          </div>
          <div className="flex w-[64px] justify-center">
            <svg width={26} height={30} viewBox="0 0 26 30">
              <path d="M1 1h24v22h-7l-5 6-5-6H1z" fill="#fff" />
              <path d="M6 7h14M6 12h14M6 17h9" stroke="#41413c" strokeWidth={1.6} />
            </svg>
          </div>
        </div>
      </div>
    </div>
  )
}
